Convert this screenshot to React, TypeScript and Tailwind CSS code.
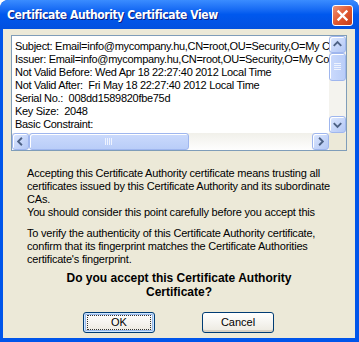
import React from "react";

const listLines = [
  "Subject: Email=info@mycompany.hu,CN=root,OU=Security,O=My Company",
  "Issuer: Email=info@mycompany.hu,CN=root,OU=Security,O=My Company",
  "Not Valid Before: Wed Apr 18 22:27:40 2012 Local Time",
  "Not Valid After:  Fri May 18 22:27:40 2012 Local Time",
  "Serial No.:  008dd1589820fbe75d",
  "Key Size:  2048",
  "Basic Constraint:",
];

function ArrowBtn({ dir }: { dir: "up" | "down" | "left" | "right" }) {
  const paths: Record<string, string> = {
    up: "M4 9.5 L8 5.5 L12 9.5",
    down: "M4 6.5 L8 10.5 L12 6.5",
    left: "M9.5 4 L5.5 8 L9.5 12",
    right: "M6.5 4 L10.5 8 L6.5 12",
  };
  return (
    <div className="w-[17px] h-[17px] shrink-0 rounded-[3px] border border-[#9fb6ee] bg-gradient-to-br from-[#dce7fe] to-[#b3c7f5] shadow-[inset_1px_1px_0_#ffffff] flex items-center justify-center">
      <svg width="15" height="15" viewBox="0 0 16 16">
        <path d={paths[dir]} fill="none" stroke="#4d6185" strokeWidth="2" />
      </svg>
    </div>
  );
}

function XpButton({ label, isDefault }: { label: string; isDefault?: boolean }) {
  return (
    <button
      className={
        "w-[72px] h-[21px] rounded-[3px] border border-[#003c74] bg-gradient-to-b from-white to-[#ece9e0] text-[11px] text-black flex items-center justify-center " +
        (isDefault ? "shadow-[inset_0_0_0_1px_#cee7ff,inset_0_0_0_2px_#98b8ea]" : "shadow-[inset_0_-2px_0_#d6d0c5]")
      }
    >
      <span
        className={
          "px-[2px] flex items-center justify-center " +
          (isDefault ? "w-[64px] h-[15px] border border-dotted border-[#333]" : "")
        }
      >
        {label}
      </span>
    </button>
  );
}

export default function App() {
  return (
    <div
      className="w-[359px] h-[342px] flex flex-col rounded-t-[8px] bg-[#0055ea] overflow-hidden"
      style={{ fontFamily: '"Liberation Sans", Arial, sans-serif' }}
    >
      <div className="h-[29px] shrink-0 flex items-center justify-between pl-[7px] pr-[6px] bg-gradient-to-b from-[#3a8cff] via-[#0058ee] to-[#0250df] rounded-t-[8px]">
        <span
          className="text-white font-bold text-[12px] [text-shadow:1px_1px_0_#0a1e80] [font-stretch:condensed]"
          style={{ fontFamily: '"DejaVu Sans Condensed", "DejaVu Sans", sans-serif', letterSpacing: "-0.4px" }}
        >
          Certificate Authority Certificate View
        </span>
        <div className="w-[21px] h-[21px] rounded-[3px] border border-white bg-gradient-to-br from-[#ec9275] via-[#e1582f] to-[#c43c1b] flex items-center justify-center mt-[1px]">
          <svg width="13" height="13" viewBox="0 0 13 13">
            <path d="M2.5 2.5 L10.5 10.5 M10.5 2.5 L2.5 10.5" stroke="white" strokeWidth="2.4" strokeLinecap="square" />
          </svg>
        </div>
      </div>

      <div className="flex-1 ml-[3px] mr-[4px] mb-[4px] bg-[#ece9d8] flex flex-col pt-[6px] text-[11px] text-black">
        <div className="mx-[8px] h-[116px] border border-[#7f9db9] bg-white flex flex-col">
          <div className="flex flex-1 min-h-0">
            <div className="flex-1 overflow-hidden pl-[3px] pt-[4px] leading-[13px] whitespace-pre tracking-[-0.3px]">
              {listLines.map((l) => (
                <div key={l}>{l}</div>
              ))}
            </div>
            <div className="w-[17px] flex flex-col bg-[#f4f3ee]">
              <ArrowBtn dir="up" />
              <div className="flex-1 flex flex-col">
                <div className="h-[28px] rounded-[3px] border border-[#9fb6ee] bg-gradient-to-r from-[#cbdafc] to-[#b9cdf8] shadow-[inset_1px_1px_0_#ffffff] flex items-center justify-center">
                  <svg width="7" height="8" viewBox="0 0 7 8">
                    <path d="M0 0.5 H7 M0 2.5 H7 M0 4.5 H7 M0 6.5 H7" stroke="#eef3fe" strokeWidth="1" />
                  </svg>
                </div>
              </div>
              <ArrowBtn dir="down" />
            </div>
          </div>
          <div className="h-[17px] flex bg-gradient-to-b from-[#f1f0ea] to-[#fefefe]">
            <ArrowBtn dir="left" />
            <div className="flex-1 flex">
              <div className="w-[160px] h-[17px] rounded-[3px] border border-[#9fb6ee] bg-gradient-to-b from-[#cbdafc] to-[#b9cdf8] shadow-[inset_1px_1px_0_#ffffff] flex items-center justify-center">
                <svg width="8" height="7" viewBox="0 0 8 7">
                  <path d="M0.5 0 V7 M2.5 0 V7 M4.5 0 V7 M6.5 0 V7" stroke="#eef3fe" strokeWidth="1" />
                </svg>
              </div>
            </div>
            <ArrowBtn dir="right" />
            <div className="w-[17px] bg-[#ece9d8]" />
          </div>
        </div>

        <div className="pl-[24px] pr-[10px] mt-[16px] leading-[13px] tracking-[-0.2px]">
          <p>
            Accepting this Certificate Authority certificate means trusting all certificates issued by this Certificate
            Authority and its subordinate CAs.
          </p>
          <p>You should consider this point carefully before you accept this</p>
          <p className="mt-[8px]">
            To verify the authenticity of this Certificate Authority certificate, confirm that its fingerprint matches
            the Certificate Authorities certificate's fingerprint.
          </p>
        </div>

        <div className="mt-[5px] px-[60px] text-center font-bold text-[12px] leading-[14px]">
          Do you accept this Certificate Authority Certificate?
        </div>

        <div className="mt-[13px] flex pl-[80px] gap-[47px]">
          <XpButton label="OK" isDefault />
          <XpButton label="Cancel" />
        </div>
      </div>
    </div>
  );
}
